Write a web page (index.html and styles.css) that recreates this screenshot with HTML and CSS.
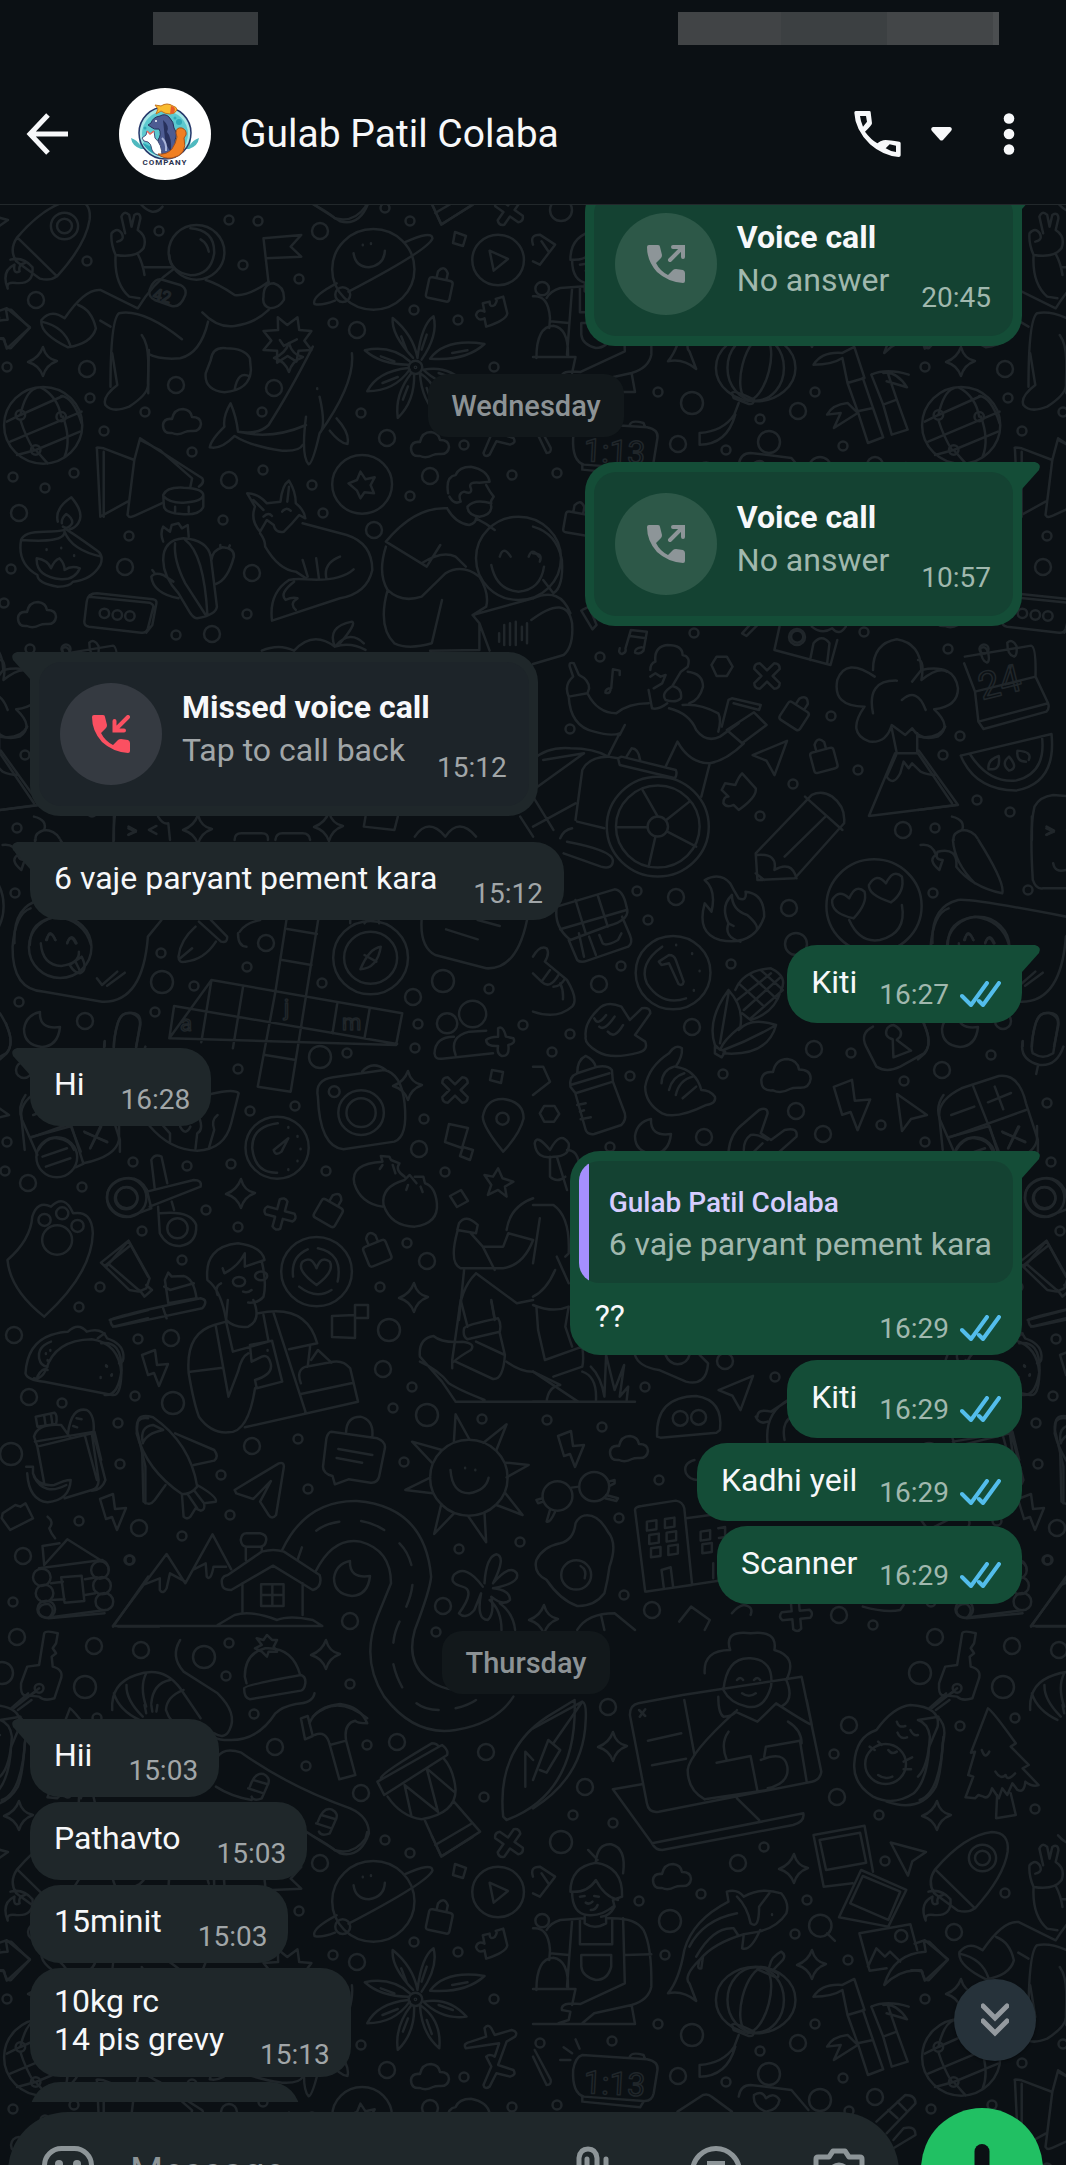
FILE: index.html
```html
<!DOCTYPE html>
<html lang="en">
<head>
    <meta charset="UTF-8">
    <meta name="viewport" content="width=device-width, initial-scale=1.0">
    <title>Gulab Patil Colaba</title>
    <link rel="stylesheet" href="styles.css">
</head>
<body>
    <!-- Shared icons -->
    <svg class="sprite" aria-hidden="true">
        <symbol id="icon-ticks" viewBox="0 0 41 26">
            <path d="M2 15l9 9L27 2M19 20l4 4L39 2" fill="none" stroke="currentColor" stroke-width="4" stroke-linecap="round" stroke-linejoin="round"/>
        </symbol>
        <symbol id="icon-handset" viewBox="0 0 38 38">
            <path d="M2 0h9q2 0 2 2l2 8q0 2-1 3l-5 5q4 8 12 12l5-5q1-1 3-1l7 1q2 1 2 3v8q0 2-2 2Q21 37 10 27Q0 16 0 2Q0 0 2 0z" fill="currentColor"/>
        </symbol>
        <symbol id="icon-call-out" viewBox="0 0 38 38">
            <use href="#icon-handset" width="38" height="38"/>
            <path d="M23 15L36 2M26 2h10v10" fill="none" stroke="currentColor" stroke-width="4" stroke-linecap="round"/>
        </symbol>
        <symbol id="icon-call-in" viewBox="0 0 38 38">
            <use href="#icon-handset" width="38" height="38"/>
            <path d="M36 2L23 15M22.500 6v9.500H32" fill="none" stroke="currentColor" stroke-width="4" stroke-linecap="round"/>
        </symbol>
    </svg>

    <div class="app">
        <div class="status-bar">
            <span class="status-left"></span>
            <span class="status-right"></span>
        </div>

        <header class="chat-header">
            <button class="icon-button back" type="button" aria-label="Back">
                <svg width="42" height="42" viewBox="0 0 42 42"><path d="M22 2L4 21l18 19M4 21h38" fill="none" stroke="currentColor" stroke-width="5"/></svg>
            </button>
            <svg class="avatar" viewBox="0 0 92 92" role="img" aria-label="Profile photo">
                <circle cx="46" cy="46" r="46" fill="#fff"/>
                <path d="M22 61q-9-3-10-11q6 2 9 7q-2-8 0-12q5 6 4 16zM70 61q9-3 10-11q-6 2-9 7q2-8 0-12q-5 6-4 16z" fill="#4fb9bf"/>
                <circle cx="46" cy="45" r="26" fill="#a6e6e6" stroke="#26386b" stroke-width="1.500"/>
                <circle cx="46" cy="46" r="23" fill="#5cc9cf"/>
                <path d="M24 56q10 15 32 13l6-8q-20 4-38-6z" fill="#2aa5b5"/>
                <path d="M29 37l3-2q2-6 9-7q5-3 9 1q5 5 5 11q4 6 1 12l2 14H40l-1-14q4-6 1-11q-5 1-8-2z" fill="#4d5c92" stroke="#27315c" stroke-width="1"/>
                <path d="M44 32q7 6 4 12q5 5 4 20q-5-6-6-13z" fill="#27315c"/>
                <path d="M43 50q5 5 4 13" fill="none" stroke="#a9b4d8" stroke-width="2"/>
                <path d="M23 50l4-3l1-4l3 3l4-3l1 7q7 6 7 18q-8-1-10-6q-1-7-4-8q-5 0-6-4z" fill="#fff" stroke="#46527c"/>
                <path d="M28 43l3 3l4-3" fill="none" stroke="#ef6a5a" stroke-width="1.500"/>
                <path d="M57 45q0-6 6-5q5 2 4 7l-2 3q4 17-12 20q-9 1-14-4q9 1 14-5q4-6 5-12z" fill="#f07f22" stroke="#a6501c"/>
                <path d="M42 18q6-4 12 0q4 1 4 4q-2 4-7 4q-5 0-9-3l-5 3l2-5l-3-4z" fill="#f9bc2f" stroke="#c4731d"/>
                <path d="M52 18q6 1 3 7l-4 1z" fill="#e95b2b"/>
                <circle cx="37" cy="33" r="1" fill="#fff"/><circle cx="60" cy="34" r="3" fill="#2fa9b8"/><circle cx="56" cy="30" r="1.500" fill="#2fa9b8"/><circle cx="26" cy="40" r="1.500" fill="#2fa9b8"/>
                <text x="46" y="77" text-anchor="middle" class="avatar-label">COMPANY</text>
            </svg>
            <h1 class="contact-name">Gulab Patil Colaba</h1>
            <button class="icon-button call" type="button" aria-label="Call">
                <svg width="47" height="46" viewBox="42 60 141 138"><path d="M47 60H88Q92 60 92 64L96 97Q96 103 75 122Q92 145 112 157Q122 150 130 148Q136 145 178 152Q182 153 182 157V193Q182 198 176 198Q130 195 90 160Q45 115 43 65Q43 60 47 60zM60 75H78L81 92L69 107Q62 92 60 75zM168 183V164L149 160L137 172Q150 181 168 183z" fill="currentColor" fill-rule="evenodd"/></svg>
                <svg class="caret" width="21" height="14" viewBox="0 0 21 14"><path d="M2 0h17q3 1 1 4l-8 9q-1.500 1-3 0L1 4Q-1 1 2 0z" fill="currentColor"/></svg>
            </button>
            <button class="icon-button more" type="button" aria-label="More options">
                <svg width="12" height="42" viewBox="0 0 12 42"><circle cx="6" cy="5.500" r="5.300" fill="currentColor"/><circle cx="6" cy="21" r="5.300" fill="currentColor"/><circle cx="6" cy="36.500" r="5.300" fill="currentColor"/></svg>
            </button>
        </header>

        <main class="conversation">
            <!-- Doodle wallpaper: one tile, repeated -->
            <svg class="wallpaper" aria-hidden="true">
                <defs>
                    <marker id="ring-s" markerUnits="userSpaceOnUse" markerWidth="14" markerHeight="14" refX="7" refY="7"><circle class="ring" cx="7" cy="7" r="4.500"/></marker>
                    <marker id="ring-m" markerUnits="userSpaceOnUse" markerWidth="20" markerHeight="20" refX="10" refY="10"><circle class="ring" cx="10" cy="10" r="8"/></marker>
                    <marker id="ring-l" markerUnits="userSpaceOnUse" markerWidth="28" markerHeight="28" refX="14" refY="14"><circle class="ring" cx="14" cy="14" r="11"/></marker>
                    <path id="sparkle" d="M1-15Q4-3 15-1Q4 3 1 14Q-3 3-14 0Q-3-4 1-15z"/>
                    <path id="cloud" d="M-10 11Q-19 12-19 3Q-18-4-10-3Q-8-13 1-13Q9-12 10-5Q19-5 19 2Q18 10 9 9Q5 9 3 10Q-4 14-10 11z"/>
                    <path id="bolt" d="M-13-13L0-18L2-3L13-4L4 18L-1 5L-7 7z"/>
                    <path id="cursor" d="M-13-18L17 3L1 7L-8 19z"/>
                    <path id="cross" d="M-4-14Q0-18 4-14V-4H14Q18 0 14 4H4V14Q0 18-4 14V4H-14Q-18 0-14-4H-4z"/>
                    <path id="moon" d="M-2-18Q-3 0 18-3Q16 16 0 17Q-18 15-18-1Q-16-15-2-18z"/>
                    <path id="lock" d="M-9-7H9Q12-7 12-4V11Q12 14 9 14H-9Q-12 14-12 11V-4Q-12-7-9-7zM-5-7V-14Q0-22 5-14V-7"/>

                    <g id="doodles">
                        <g class="rings">
                            <path class="s" d="M229 220L258 221L159 231L243 265L299 279L87 261L385 208L410 221L414 310L458 320L333 323L7 367L90 398L145 412L104 431L192 452L13 477L74 473L45 488L263 470L312 485L223 520L323 513L262 412L361 413L410 496L129 536L11 569L4 603L247 614L176 635L464 445L512 475L494 367L30 649L66 649L658 392L815 392L760 419L843 446L726 450L557 473L849 479L694 633L864 632L600 657L570 729L831 716L42 736L25 755L858 770L793 784L760 816L59 800L92 812L17 828L15 893L161 953L194 986L247 967L19 1002L155 1012L322 983L489 989L418 1024L523 1025L415 1048L347 1053L238 1069L295 1106L250 1111L424 1119L7 1142L5 1171L82 1187L133 1162L187 1166L231 1164L326 1171L445 1172L206 1210L238 1227L142 1231L182 1260L407 1243L100 1287L380 1287L79 1307"/>
                            <path class="s" d="M637 891L648 920L621 966L731 964L110 890L570 1034L552 1052L723 1074L630 1076L851 1053L73 1055L904 1081L881 1125L129 1103L610 1147L645 1387L547 1420L602 1427L775 1377L118 1423L659 1480L619 1518L624 1595L873 1625L129 1560L135 1396L138 1339L62 1403L120 1464L79 1521L182 1536L130 1560L13 1602L221 1475L230 1515L298 1439L308 1489L393 1408L412 1387L482 1419L404 1462L459 1549L520 1542L229 1643L226 1676L436 1632L350 1684L254 1714L367 1745L306 1766L484 1797L834 1754L573 1815L613 1823L42 1726L97 1718L117 1809L879 1815L764 215L885 229L639 269L701 262L807 268L795 302L665 323L848 328L540 411L612 409"/>
                            <path class="m" d="M320 231L357 330L36 300L176 385L274 388L387 438L229 480L19 513L374 530L430 476L125 567L252 573L212 634L87 369L678 444L798 411L875 465L903 830L797 637L266 943L85 1021L413 997L28 1183L419 1149L427 1261L676 897L789 908L599 984L692 1027L814 1049L24 1070L704 1137L796 1111L823 1134L725 1361L652 1610L839 1615L171 1338L383 1369L29 1397L252 1446L14 1335L139 1528L23 1556L443 1606L17 1637L94 1646L141 1650L350 1621L275 1747L397 1742L486 1752L361 1793L608 1707L585 1787L837 1797L849 1725L738 231"/>
                            <path class="l" d="M692 403L769 442L820 468L162 982L443 981L320 1057L796 944L389 1330L173 1403L427 1415L11 1454L204 1657L85 1687L2 1673L561 210L670 289"/>
                        </g>

                        <!-- small repeating shapes -->
                        <use href="#sparkle" x="288" y="358"/><use href="#sparkle" x="42" y="362"/><use href="#sparkle" x="240" y="1194"/>
                        <use href="#sparkle" x="413" y="1298"/><use href="#sparkle" x="407" y="1086"/><use href="#sparkle" x="325" y="1655"/>
                        <use href="#sparkle" x="18" y="1816"/><use href="#sparkle" x="612" y="1747"/><use href="#sparkle" x="793" y="237"/>
                        <use href="#sparkle" x="811" y="333"/><use href="#sparkle" x="328" y="827"/><use href="#sparkle" x="197" y="830"/><use href="#sparkle" x="543" y="1620"/>
                        <use href="#cloud" x="182" y="422"/><use href="#cloud" x="37" y="615"/><use href="#cloud" x="430" y="445"/>
                        <use href="#cloud" transform="translate(786 1076) scale(1.300)"/><use href="#cloud" x="629" y="1449"/><use href="#cloud" x="672" y="245"/>
                        <use href="#bolt" transform="translate(852 1105) scale(1.400)"/><use href="#bolt" x="571" y="1449"/><use href="#bolt" x="113" y="1512"/><use href="#bolt" x="155" y="1368"/>
                        <use href="#cursor" x="910" y="1112"/><use href="#cursor" transform="translate(739 1393) rotate(75)"/>
                        <use href="#cursor" transform="translate(909 223) rotate(-20)"/><use href="#cursor" transform="translate(773 758) rotate(75)"/>
                        <use href="#cross" transform="translate(767 676) rotate(45)"/><use href="#cross" transform="translate(455 1090) rotate(45)"/>
                        <use href="#cross" transform="translate(280 1214) rotate(15)"/><use href="#cross" transform="translate(509 211) rotate(35)"/><use href="#cross" transform="translate(796 1615) rotate(-5)"/>
                        <use href="#moon" x="42" y="1030"/><use href="#moon" x="653" y="1137"/><use href="#moon" x="352" y="1579"/>
                        <use href="#lock" transform="translate(440 286) rotate(12)"/><use href="#lock" transform="translate(796 713) rotate(33)"/>
                        <use href="#lock" transform="translate(823 757) rotate(-15)"/><use href="#lock" transform="translate(330 1210) rotate(30)"/>
                        <use href="#lock" transform="translate(376 1250) rotate(-22)"/><use href="#lock" transform="translate(577 520) rotate(10)"/>
                        <path d="M449 1124L468 1128L462 1148L445 1142zM463 1147L473 1150L470 1160L460 1156zM492 1070L503 1072L501 1083L490 1080zM450 1196L461 1190L468 1201L457 1207zM455 232L466 236L463 246L453 243zM332 1316L355 1315V1338L332 1337zM355 1305H368V1318H355z"/>

                        <!-- astronaut, planet, flower -->
                        <g transform="scale(.34 .3333)">
                            <path d="M340 765Q325 730 328 700Q345 680 358 700Q368 720 345 725M368 700L357 650Q365 630 380 645L387 680L395 645Q412 635 413 655L405 690Q435 710 422 745Q400 775 340 765Q335 850 380 890L410 895M405 762Q420 790 425 825"/>
                            <circle cx="578" cy="757" r="82"/><path d="M560 685Q632 690 630 760Q620 825 560 826Q500 815 498 765M590 718Q610 730 614 755"/>
                            <path d="M425 802H510M510 808Q450 850 405 925L295 870Q250 865 190 955Q150 925 122 960Q115 1000 200 1042Q270 1030 282 985Q270 930 230 915M122 965Q190 980 208 1040M605 840Q640 850 690 885Q730 890 790 845M775 890Q775 850 805 850Q838 860 835 900Q820 925 795 925Q770 920 775 890M595 937Q640 985 690 978Q750 970 790 930M612 965Q590 1060 530 1075Q470 1080 436 1062M325 1160Q325 960 350 940Q420 925 535 1018M417 1005Q435 1030 436 1080V1180M295 962L325 980"/>
                            <path d="M440 870Q455 830 480 840L530 855Q550 865 545 885Q530 925 505 918L455 900Q435 890 440 870M775 715L886 705L855 740L886 770L783 775M775 715L790 850"/>
                            <circle cx="1098" cy="808" r="121"/><circle cx="1008" cy="884" r="22"/>
                            <path d="M1190 727Q1270 690 1272 715Q1260 750 1025 875M990 850Q915 890 925 912Q945 918 985 902M1040 760Q1045 800 1085 802Q1130 795 1132 752M1067 734v2M1091 730v2"/>
                            <circle cx="1465" cy="780" r="76"/><path d="M1440 752L1494 777L1452 812z"/>
                            <path d="M775 993L818 990L817 952L845 975L875 952L880 990L916 993L895 1022L916 1050L878 1052L872 1085L846 1068L815 1088L815 1052L775 1050L798 1022zM823 1020L835 1038L873 1018"/>
                            <path d="M1420 910L1440 905Q1440 925 1455 915Q1465 900 1458 897L1480 890L1492 940Q1490 960 1430 980L1425 955Q1405 965 1400 945Q1405 925 1425 935zM-10 935L20 925L88 982L20 1046L10 1015H-20"/>
                            <path d="M620 1080Q625 1040 665 1045Q720 1045 735 1075L738 1110Q735 1170 660 1177Q600 1170 605 1120zM690 1170Q700 1110 735 1130M920 612Q970 640 985 655Q1040 670 1075 620L1080 600M1270 612L1298 673L1390 615M412 610Q450 655 478 620"/>
                        </g>
                        <text x="152" y="299" transform="rotate(14 152 299)" font-size="16">42</text>

                        <!-- globe, whale, fox, cactus, lamp -->
                        <g transform="translate(0 360) scale(.34 .3333)">
                            <circle cx="127" cy="196" r="115"/>
                            <path d="M60 165Q75 95 105 85M180 170Q170 110 120 82M20 185L60 165L185 108M30 245L240 155M60 180Q75 230 100 270M185 170Q210 240 190 290M105 270L235 215M180 108Q215 110 240 190M50 285L105 270L140 310"/>
                            <circle cx="60" cy="165" r="14"/><circle cx="180" cy="170" r="14"/><circle cx="105" cy="270" r="14"/>
                            <path d="M330-20L345 75Q300 110 310 135Q330 160 380 140Q440 100 435 70L438-30M285 265Q280 260 305 265L395 300L375 465Q380 475 395 468L480 428M285 265L295 470L375 425M305 275V470M395 300L412 235L595 355Q602 370 585 380M412 240L470 270L565 355L560 380"/>
                            <path d="M480 405Q490 380 540 383Q600 385 598 408V440Q590 465 540 463Q480 460 482 435zM482 410Q500 430 540 428Q595 425 598 405M515 440v15M555 440v15"/>
                            <path d="M1035-20Q1045 70 940 220Q920 310 908 313Q885 290 900 170M920-40Q850 100 790 195Q760 225 700 215Q695 170 678 130Q655 170 660 200Q620 240 617 262Q650 270 690 228Q740 260 830 272Q880 275 890 255M700 215Q800 240 900 195M940 220Q960 200 940 110M990 175Q1030 220 1022 252Q1000 250 970 212M933 85v2"/>
                            <circle cx="1065" cy="373" r="88"/><path d="M1025 370L1050 360L1060 335L1075 358L1102 352L1090 375L1100 400L1072 397L1060 415L1050 392z"/>
                            <path d="M727 400Q760 400 785 430L825 425Q830 375 850 362Q870 395 870 430Q895 450 898 475L880 465Q860 490 835 515Q810 520 805 495L785 480L765 515Q735 480 750 440zM775 470Q790 455 800 468M830 455Q840 440 855 452M765 520Q780 540 780 560Q820 630 870 635L900 655M890 490L1020 525Q1095 550 1095 630Q1080 700 1000 715L800 782Q790 700 850 660Q870 655 900 658Q1000 665 1040 628M865 665Q820 700 840 720Q860 710 875 715Q850 730 870 750M890 600L905 650M930 595L938 655M1000 590Q950 610 960 655M745 420L775 450M850 380L845 425"/>
                            <path d="M170 485Q160 445 210 412Q250 460 230 490Q220 505 205 508M182 490Q180 475 195 462Q215 475 212 490Q200 510 185 500M62 540Q70 515 130 515Q175 515 195 508Q215 520 290 575Q305 590 295 615Q270 660 215 665Q205 680 170 680Q110 670 110 645Q50 610 62 540M62 540Q190 550 190 515M190 515Q210 570 298 590M108 595Q140 600 150 625Q160 600 175 595Q190 610 190 630Q210 615 235 625Q220 660 180 658Q105 650 108 595M137 568v2M180 563v2M218 586v2"/>
                            <path d="M480 600Q480 540 540 535Q610 540 620 590L638 740Q635 765 580 775Q570 775 560 760L525 700Q480 650 480 600M515 550Q510 600 545 670L605 765M545 540Q600 580 610 765M480 545Q470 520 480 500L500 515L505 495L525 490L535 505L552 495L555 530M622 600Q625 570 655 562Q690 565 688 590Q670 660 635 672M525 715Q450 700 445 650Q455 635 480 645L510 665M648 555v10M676 556l-3 8M448 630l6 8"/>
                            <path d="M262 710L440 728Q455 735 450 745L435 805Q430 820 415 818L262 800Q248 798 248 785L255 725Q258 700 285 700L450 718Q462 720 460 730L448 795L430 818"/>
                            <circle cx="307" cy="760" r="14"/><circle cx="345" cy="765" r="14"/><circle cx="382" cy="768" r="14"/>
                            <path d="M1318 400Q1310 350 1340 345Q1350 320 1385 320Q1435 330 1440 365L1410 368Q1375 365 1385 385Q1390 405 1365 395Q1345 400 1355 425Q1335 435 1322 410M1430 375Q1440 395 1452 410Q1440 425 1445 440Q1445 465 1410 470Q1375 465 1375 440Q1395 415 1445 430M1315 445Q1340 490 1380 495Q1400 490 1400 475M1315 445Q1220 440 1135 545L1255 620L1295 555M1400 475Q1430 490 1455 510M1135 560Q1110 640 1140 690Q1180 730 1240 710Q1290 660 1310 640Q1360 610 1410 650Q1440 700 1430 740L1390 765M1240 610Q1300 570 1340 590L1370 620M1140 690Q1110 800 1160 850Q1200 870 1270 850L1300 720M1265 872L1410 870V790L1390 765L1568 715M1410 790L1440 872"/>
                            <circle cx="1525" cy="595" r="125"/><path d="M1470 590Q1480 555 1502 590M1555 590Q1565 560 1585 590M1445 615Q1460 690 1525 695Q1590 690 1600 620M1468 820v25M1483 795v60M1500 790v65M1517 785v70M1535 800v40M1550 790v60"/>
                            <path d="M770 872Q820 850 865 872Q920 810 985 860Q1030 845 1075 870M985 860Q960 800 1035 785Q1050 790 1000 850M990 855Q1030 810 1070 850M0 900Q20 900 10 960Q60 920 85 935M0 1130Q60 1140 80 1100M0 1180L100 1330M0 1350L110 1335"/>
                            <path d="M335 1370V1440M465 1370Q480 1395 495 1390L500 1440M378 1400l22 12l-22 12M460 1398l-22 12l22 12M100 1370Q140 1380 130 1410Q100 1420 105 1440M130 1410Q160 1410 175 1435M690 1440Q690 1420 710 1420H770Q790 1420 788 1440M810 1440Q812 1420 830 1420H890Q910 1420 912 1440M1075 1370L1070 1400L1160 1410L1170 1370M1220 1430Q1260 1370 1310 1430Q1350 1370 1400 1430M1530 1370L1568 1430"/>
                        </g>

                        <!-- dancer, calendar, melon, tree -->
                        <g transform="translate(533 360) scale(.34 .3333)">
                            <path d="M-5 780Q100 700 115 790Q120 860 90 885L0 912M0 500Q70 520 85 600Q90 680 60 700L30 660M0 715Q80 680 110 760M0 580Q30 580 20 605M145 750L165 740L187 795L175 808L142 752M615 820L655 775L665 790L628 828z"/>
                            <path d="M255 865Q250 880 262 882Q275 878 272 865L288 810L335 815L325 872Q315 885 300 878Q298 865 320 862M285 828L332 835M228 990Q225 1003 213 998Q212 985 230 985L235 928L255 932V945"/>
                            <path d="M345 930Q345 910 360 905Q355 860 395 855Q440 855 440 885Q465 890 455 920L435 935L410 978M455 935Q500 940 500 980Q490 1020 460 1030M345 950L360 940L375 950L390 945L380 970L355 985M340 990L350 1045Q370 1050 395 1030M410 978Q440 985 435 1015Q420 1030 390 1020Q375 1000 410 978M340 1030Q280 1030 245 1060Q190 1060 160 1000L165 985Q165 960 135 945L120 910Q105 905 108 920L118 950Q90 975 105 1010Q110 1100 180 1115Q230 1130 255 1120L220 1190M105 1010L160 1000M270 1095L255 1125M400 1045Q460 1060 480 1110Q510 1150 550 1130L605 1090M440 1035Q490 1030 545 1060Q555 1080 545 1115M390 1220L425 1145Q460 1210 520 1210Q570 1200 620 1150M520 1210L495 1310"/>
                            <path d="M555 1100L575 1020L585 1015L670 1035L665 1050L590 1030M570 1110L650 1057L687 1095L615 1150zM0 1200Q40 1160 110 1165Q180 1165 220 1190L250 1195M30 1200L150 1180M0 1290L150 1180M125 1380L145 1230Q165 1190 220 1190M250 1195L260 1190L420 1230Q425 1240 418 1255L255 1215zM275 1190L290 1165Q310 1165 315 1200M0 1400L125 1330M0 1310L60 1410M130 1385L210 1405M80 1435Q90 1410 115 1405"/>
                            <circle cx="367" cy="1400" r="150"/><circle cx="367" cy="1400" r="123"/><circle cx="367" cy="1400" r="30"/>
                            <path d="M367 1370L322 1290M392 1380L460 1325M395 1415L480 1460M360 1430L340 1520M338 1402H245"/>
                            <path d="M725 800L710 870L875 915L895 840M815 900L825 850Q850 820 872 850L865 912M820 800Q850 825 880 805Q900 830 920 800M525 915L540 890H570L587 920L570 948H540z"/>
                            <circle cx="777" cy="830" r="18"/>
                            <path d="M1000 930Q1000 850 1070 838Q1140 850 1142 930Q1240 910 1250 985Q1250 1040 1180 1048Q1235 1100 1190 1130Q1140 1145 1115 1105L1095 1125L1055 1095Q1040 1150 990 1145Q920 1120 975 1040Q880 1040 895 960Q920 890 1005 950M1000 1060Q980 960 1070 962M1085 1020Q1130 980 1155 1050M1142 930L1115 965M1055 1105L1070 1180H1130V1120M1065 1180L988 1368L1250 1335L1135 1172M1068 1185L1040 1250Q1060 1280 1080 1240L1090 1205L1105 1225L1115 1210L1140 1235Q1160 1245 1185 1245"/>
                            <path d="M1270 890L1465 857Q1480 860 1478 950L1300 995L1268 910M1478 950L1515 1030Q1520 1045 1510 1055L1325 1107L1310 1085L1300 995M1310 1085L1515 1030M1315 865Q1330 855 1338 875Q1345 905 1335 908Q1320 905 1315 865M1395 848Q1410 835 1422 858Q1425 885 1415 890Q1395 885 1395 848"/>
                            <path d="M1258 1187L1525 1122Q1540 1270 1420 1292Q1300 1290 1258 1187M1285 1182Q1340 1270 1420 1262Q1510 1240 1497 1130M1340 1228Q1335 1200 1370 1188Q1375 1230 1350 1228zM1400 1232Q1375 1210 1400 1190Q1430 1225 1400 1232zM1450 1205Q1420 1205 1425 1172Q1470 1175 1458 1200"/>
                            <path d="M565 1270L595 1275Q605 1250 615 1240L655 1285Q660 1310 605 1350L590 1335Q570 1345 560 1330Q560 1310 575 1310L555 1290zM660 1560L655 1480L820 1305Q850 1290 880 1310Q920 1340 915 1390L770 1555zM800 1310L910 1410M740 1490L860 1370M660 1485Q720 1480 710 1530Q760 1500 775 1555M655 1540L680 1560"/>
                            <path d="M1470 1560Q1460 1400 1475 1340Q1490 1310 1530 1305L1568 1308M1510 1405l22 10l-22 10M1530 1510Q1535 1540 1568 1530M1470 1560Q1480 1590 1500 1585H1568"/>
                        </g>
                        <text x="982" y="700" transform="rotate(-14 982 700)" font-size="38">24</text>

                        <!-- sticker, crossword, compass, camera -->
                        <g transform="translate(0 840) scale(.34 .3333)">
                            <path d="M90 205Q45 220 37 320Q35 450 130 455L300 485Q420 490 435 290L475 240M285 415L300 435L345 395M315 437L367 398"/>
                            <circle cx="177" cy="322" r="92"/><path d="M138 300Q145 260 163 300M198 308Q210 275 225 310M120 310Q125 375 180 378Q235 370 232 335M205 375L240 350Q260 390 235 400Q220 400 205 375M222 365l12 25"/>
                            <path d="M585 245L650 305Q670 310 668 290L620 240M575 260Q530 300 525 350Q525 370 545 365Q600 360 635 305M530 355L565 325M700 280Q700 320 725 320M705 275Q720 250 765 240"/>
                            <path d="M850 190L810 455L758 740L855 755L942 200M845 267L932 282M830 360L916 375M622 420L1183 520L1165 615L498 595zM512 498L1168 612M622 420L592 607M715 440L685 625M992 490L978 580M1087 508L1072 595M780 645L870 660M512 498L498 595"/>
                            <circle cx="1090" cy="353" r="110"/><circle cx="1090" cy="353" r="78"/><path d="M1120 320Q1085 325 1060 388Q1110 385 1120 320M1072 345l35 20M1030 250V235M1115 250Q1110 200 1072 250"/>
                            <path d="M1240 240Q1235 320 1280 345L1430 385Q1520 390 1550 240M1312 268L1405 298M1405 240L1470 258M0 520Q50 600 20 640L0 658M335 620Q340 530 370 520Q420 510 412 560L400 620M308 603v15"/>
                            <circle cx="1315" cy="550" r="30"/><circle cx="1390" cy="522" r="40"/><path d="M1335 590Q1280 590 1278 640Q1280 660 1300 656L1450 640M1340 645Q1320 590 1380 575L1430 572M1465 565Q1480 555 1488 590L1510 595Q1518 610 1495 615Q1500 650 1475 648Q1460 640 1465 618Q1430 620 1430 600Q1440 590 1465 590z"/>
                            <path d="M935 770Q925 720 980 712L1130 690Q1180 700 1190 790Q1200 890 1160 905L1010 928Q940 920 935 770M1065 695Q1095 660 1135 690"/>
                            <circle cx="1062" cy="818" r="67"/><circle cx="1062" cy="818" r="43"/><circle cx="983" cy="755" r="16"/>
                            <path d="M1480 935Q1420 860 1420 830Q1430 775 1480 777Q1540 785 1540 835Q1530 880 1480 935"/><circle cx="1478" cy="836" r="18"/>
                            <circle cx="815" cy="923" r="93"/><path d="M817 850Q740 860 742 925Q750 1000 815 998M805 930L848 895L828 935Q810 950 805 930M848 861v2M875 888v2M884 926v2M875 962v2M848 988v2"/>
                            <path d="M75 765Q50 800 65 840L110 945M210 858L245 970Q340 950 350 900V858M90 892L210 858M250 878L315 905M295 860L265 925M125 950l72-25M135 980l72-25M248 970L222 982M440 858Q500 930 580 932Q660 930 680 850L702 760Q690 745 620 762M480 858L500 880V905M530 860Q545 890 560 860M585 830Q600 870 580 880L575 925M640 825Q620 840 630 870L615 922"/><circle cx="167" cy="952" r="60"/>
                            <path d="M1190 1010Q1160 990 1175 970L1150 960L1145 950L1120 948L1125 965Q1030 970 1042 1030Q1060 1090 1125 1100M1225 1030L1205 1005L1190 1020Q1120 1040 1128 1095Q1150 1160 1220 1160Q1290 1150 1285 1090Q1280 1040 1250 1030L1245 1010L1220 1010M1125 975l-8 12M1155 975l8 25M1200 1035l-5 15M1237 1040l6 16"/>
                            <path d="M130 1430Q30 1350 22 1260Q90 1200 95 1130Q110 1080 150 1100Q190 1060 215 1120Q270 1110 273 1180Q270 1300 130 1430"/>
                            <circle cx="168" cy="1200" r="44"/><circle cx="131" cy="1140" r="18"/><circle cx="183" cy="1120" r="18"/><circle cx="228" cy="1158" r="18"/>
                            <path d="M432 1050Q410 1010 370 1015Q310 1030 315 1080Q330 1130 380 1130L445 1105zM432 1055L570 1020Q595 1020 590 1040L440 1100M455 1045L445 960Q455 940 475 950L492 1030M465 1100L470 1180Q490 1220 530 1218Q580 1210 577 1155Q560 1110 470 1120M505 1085L512 1110"/>
                            <circle cx="371" cy="1075" r="33"/><circle cx="522" cy="1165" r="30"/>
                            <path d="M297 1268L378 1202L440 1315L430 1345L408 1355L380 1350zM308 1278L385 1215M410 1350L425 1370L447 1350L430 1335M485 1320L495 1298L505 1310L540 1308Q570 1315 578 1375L495 1390zM483 1340L500 1350L570 1330M325 1440Q330 1430 590 1375Q615 1380 595 1405L340 1460Q325 1460 325 1440M480 1405l10 30"/>
                            <path d="M665 1440Q650 1350 610 1320Q600 1220 700 1210Q770 1220 778 1260L720 1280V1240Q700 1280 660 1300L655 1285M770 1265Q785 1330 775 1370Q760 1390 730 1388M650 1330Q630 1340 640 1365M715 1355Q728 1360 740 1350"/>
                            <ellipse cx="703" cy="1325" rx="18" ry="14"/><ellipse cx="768" cy="1308" rx="18" ry="13"/>
                            <circle cx="931" cy="1295" r="104"/><path d="M931 1335Q870 1290 890 1265Q915 1245 931 1285Q945 1245 970 1265Q985 1295 931 1335M862 1310Q855 1250 905 1228M935 1225Q1010 1240 993 1325M880 1340Q930 1380 975 1350"/>
                            <path d="M1425 1005L1450 1010L1465 985L1478 1015L1510 1025L1485 1040L1490 1070L1465 1050L1435 1065L1445 1035z"/>
                            <path d="M1350 1150Q1370 1120 1405 1155L1400 1180L1345 1170zM1345 1175Q1320 1270 1355 1285H1480Q1540 1275 1568 1200M1385 1180L1420 1220H1480L1495 1180L1568 1200M1490 1170Q1500 1100 1568 1075M1420 1220L1455 1290M1365 1290L1350 1440M1400 1300Q1350 1350 1350 1440M1400 1300L1520 1390L1568 1380M1445 1385L1455 1440"/>
                        </g>
                        <g font-size="22"><text x="180" y="1031">a</text><text x="284" y="1015">j</text><text x="342" y="1030">m</text></g>

                        <!-- fire, clock, corn, hands -->
                        <g transform="translate(533 840) scale(.34 .3333)">
                            <path d="M90 40L200 80Q235 90 235 60Q230 30 100 5M70 200L240 148Q265 150 275 200Q290 240 220 258L110 300Q60 260 70 200M125 180L155 280M190 165L220 260M80 268L275 210M105 300L130 360Q140 370 160 362L280 320Q295 310 285 285L262 230M165 290L185 345M135 280L150 350M195 285L205 310Q215 320 250 300L260 280"/>
                            <path d="M505 120Q540 150 525 215L505 190Q480 280 550 300Q650 320 680 230Q680 160 625 155Q630 185 605 175Q590 150 580 130Q550 95 505 120M585 165Q550 200 575 250Q560 290 610 305M585 165Q585 210 630 225Q670 260 655 275M575 250L590 258"/>
                            <circle cx="412" cy="398" r="110"/><path d="M380 320Q310 370 335 430Q380 500 450 475M370 365L400 345Q415 345 420 360L443 425Q440 440 428 432L400 370L378 375zM421 314v2M468 340v2M490 392v2M473 450v2"/>
                            <path d="M575 450Q510 540 535 615L550 630Q560 600 610 560Q620 500 575 450M575 460L550 610M560 640Q690 650 715 555Q640 530 605 570M560 630Q640 600 715 555M535 620L565 635L555 652L535 640zM595 450Q620 390 700 385Q750 410 730 450Q710 520 640 540L615 520M605 430L680 500M640 405L715 475M670 390L730 445M600 480L700 400M620 510L730 410M640 535L735 450"/>
                            <circle cx="1003" cy="198" r="140"/><path d="M943 235Q875 220 880 180Q900 145 930 175Q950 130 975 155Q985 190 943 235M1053 187Q985 165 988 135Q1010 95 1038 130Q1060 85 1085 110Q1095 155 1053 187M930 240Q960 310 1020 300Q1100 280 1085 195"/>
                            <path d="M0 350Q20 315 40 325Q50 340 35 365L100 420Q135 480 115 500Q70 540 0 515M0 400L25 425L50 390M25 425Q50 450 75 405M60 440Q80 440 95 415M80 430Q90 450 88 478"/>
                            <path d="M155 590Q150 550 190 510Q215 480 260 500L285 540L320 505Q345 500 345 520L300 585L330 605Q340 630 310 638Q230 660 190 635Q150 610 155 590M180 535Q190 560 215 525M195 560Q210 575 240 530M220 575Q240 600 265 555"/>
                            <path d="M400 640Q420 610 438 625Q440 650 420 680Q480 690 495 750Q520 750 535 770Q540 790 510 795Q420 840 380 820Q330 790 330 740Q340 680 400 640M415 680Q380 690 378 730M400 750Q410 710 445 700M420 765Q430 720 470 710M440 775L480 740"/>
                            <path d="M110 740Q105 710 130 700L190 680Q220 675 232 690L235 725L125 760zM110 735L225 700M130 700Q130 660 155 648Q180 660 185 682M125 762L155 870Q160 885 180 882L260 855Q275 840 270 820L235 725M130 795l25-5M138 815l12-4M140 838l30-6"/>
                            <path d="M575 935Q580 880 620 850L665 810Q690 800 690 820L670 880L700 900L740 870Q780 860 775 890L720 940M620 930Q620 900 640 885Q660 880 690 900M650 935L675 910M0 680L30 680L50 725L0 765M20 820L33 798H63L77 822L62 845H33z"/>
                            <path d="M1000 560Q960 580 980 620L1010 680Q1040 700 1080 680L1150 640Q1170 620 1160 580L1150 550M1060 555Q1090 570 1080 590L1070 600L1112 632L1060 652L1058 598Q1030 590 1042 565Q1050 555 1060 555"/>
                            <path d="M1205 930L1195 830Q1190 780 1260 745L1370 708Q1430 700 1450 790L1485 900V935M1295 740L1370 935M1225 892L1450 810M1230 825l68-25M1338 787l68-28M1358 740l25 68M1380 875l68 32M1430 860l-32 65M1245 930Q1270 890 1300 895Q1340 900 1350 930"/>
                            <path d="M1470 640Q1460 620 1480 545Q1490 515 1520 520Q1550 530 1543 560L1530 640Q1500 660 1470 640M1440 605Q1430 660 1490 675Q1540 680 1560 620M1485 678L1480 702M1175 310Q1170 200 1250 180Q1290 175 1568 230M1220 315Q1220 240 1300 230Q1380 240 1400 315M1268 300Q1280 265 1295 300M1330 310Q1340 280 1355 310M1140 15Q1175 10 1185 45Q1160 60 1195 90L1205 60Q1180 60 1190 35Q1250 20 1245 80Q1290 140 1380 160Q1390 130 1310 0M1235 0Q1240 70 1300 130"/>
                        </g>

                        <!-- jelly, glasses, egg, buildings -->
                        <g transform="translate(533 1130) scale(.34 .3333)">
                            <path d="M5 40Q10 10 50 60Q80 0 105 40Q110 80 60 80Q10 90 5 40M70 80L100 180M50 80V140Q70 160 95 140M100 60Q130 60 135 100M0 225H60Q110 260 105 370L95 380M20 265L0 400M70 380L105 460M0 500Q40 480 65 420M0 525Q60 550 105 530M10 530L15 600L35 690M105 530L95 590L115 650M35 690L145 650Q150 690 145 710L60 740M0 725L80 765Q45 770 40 815H0H300M145 725Q190 740 185 815M170 710Q200 740 210 800L215 675L240 780L268 705L255 800L280 770L275 815"/>
                            <path d="M365 920Q360 800 480 798Q560 810 550 900L540 908L375 923zM300 675Q310 710 370 720L450 755Q510 770 515 700L490 675M390 675Q400 700 425 703Q455 700 460 675"/>
                            <circle cx="433" cy="865" r="22"/><circle cx="487" cy="862" r="22"/><circle cx="72" cy="1098" r="44"/><circle cx="180" cy="1070" r="44"/>
                            <path d="M113 1073L135 1070M222 1055L240 1050V1060L225 1068M215 1095L250 1105L245 1113L212 1105M28 1105L10 1110L15 1120L30 1115M50 1140L40 1175Q50 1180 65 1145"/>
                            <path d="M150 1157Q190 1150 220 1205Q250 1240 225 1310Q220 1350 210 1390Q180 1430 130 1428Q80 1410 40 1350Q0 1330 10 1290Q30 1250 80 1240Q120 1230 125 1180Q135 1160 150 1157"/>
                            <circle cx="127" cy="1335" r="44"/><path d="M140 1308Q160 1320 152 1345"/>
                            <path d="M330 1385L300 1140Q300 1130 320 1128L420 1112Q440 1115 445 1135L468 1365zM335 1385L560 1350M450 1165L560 1150M385 1375L378 1320L405 1312L412 1370M335 1175l28-4v27l-28 4zM388 1167l28-4v27l-28 4zM342 1215l28-4v27l-28 4zM393 1208l28-4v27l-28 4zM347 1255l28-4v27l-28 4zM398 1248l28-4v27l-28 4zM493 1205l28-4v27l-28 4zM498 1243l28-4v27l-28 4zM545 1195l20-4v30l-18 3M530 1345V1300"/>
                            <path d="M660 860Q660 835 700 845L745 815M655 860Q665 885 690 875M690 940Q680 850 750 810M740 930Q730 880 760 860M475 990Q440 1000 450 1030Q460 1050 485 1050M130 1500Q160 1450 240 1450L300 1500M200 1455L210 1500M430 1475L465 1430L520 1470L505 1500M585 1450Q600 1430 620 1425Q650 1430 640 1455M970 1430Q1040 1450 1080 1440L1090 1425M1245 1440Q1250 1420 1275 1422Q1300 1440 1275 1465Q1245 1460 1245 1440M1275 1465L1440 1450"/>
                            <circle cx="1505" cy="203" r="58"/><circle cx="1505" cy="203" r="32"/>
                            <path d="M1555 170L1568 200M1445 410L1510 333L1568 440M1455 405L1540 480M1455 570L1568 540M1465 590L1568 565M1430 640Q1490 630 1490 720Q1480 800 1440 795M1440 610L1420 625M1447 708v2M1460 735v2M1535 900Q1530 860 1568 865M1535 900L1560 1010V1120M1235 935L1410 905L1430 990M1465 1490L1568 1340M1480 1490H1600"/>
                        </g>

                        <!-- taco, house, road, sun -->
                        <g transform="translate(0 1300) scale(.34 .3333)">
                            <path d="M75 220Q80 130 150 105Q180 95 200 95Q230 65 255 95Q300 80 315 115Q360 130 363 165Q365 190 350 190M75 220Q80 240 130 245L330 285Q355 290 357 220Q350 130 270 118Q160 120 135 210Q120 240 100 235M150 125Q110 140 115 175Q120 200 140 200M312 196v3M296 231v3M329 223v3M110 230Q125 200 140 210M135 160v2M148 150v2M140 180v2"/>
                            <path d="M555 220Q545 100 630 75L665 65L685 155L790 125L775 45M560 215L655 203M635 80L672 290L700 215Q710 170 730 160M555 220Q570 310 585 350Q620 400 670 397Q730 400 750 265M670 0L665 60Q690 85 730 80Q770 60 745 0M735 135L800 122L830 245L755 265L750 240Q800 225 797 195Q790 160 770 170L740 185zM760 40Q900 10 933 130L850 148M805 40L900 340M720 382L1053 305L1030 205Q1010 180 980 185L900 200Q870 210 885 250M885 282L1040 248M905 200L912 140M915 180L935 150L975 188M787 150v2"/>
                            <path d="M1340 305H1700L1568 215M1340 305L1300 245L1235 170Q1230 115 1275 108Q1300 130 1360 125Q1400 130 1385 150Q1350 170 1335 185M1235 185Q1290 210 1320 250Q1350 270 1425 300M1330 205V180L1355 0L1375 80M1445 0L1455 55M1365 85Q1370 75 1465 55Q1475 70 1470 95L1375 118Q1360 110 1365 85M1470 100L1485 165Q1480 240 1450 237L1340 185M1400 125L1485 165M1490 185Q1530 215 1568 215"/>
                            <path d="M105 350L160 338Q170 345 165 372L110 380zM130 348l4 28M150 343l4 28M110 440L100 410Q110 370 180 375L205 410M200 400Q210 320 255 330Q280 345 275 400M110 440L270 400L290 540Q290 565 270 570L190 595M110 440L130 550M250 408L285 540M275 400L310 540Q300 570 270 572M77 500H97V520Q110 560 160 555Q190 540 208 540Q205 600 140 607Q85 600 80 520M100 530Q130 590 195 555M225 355l15 3M215 378l12 4"/>
                            <path d="M405 365Q410 340 450 352Q560 430 580 560Q560 585 535 582Q430 510 402 400zM420 430Q410 380 450 375L480 390Q430 400 420 430M515 400L630 450Q645 470 630 482L570 495M418 450L422 605Q440 620 455 600L487 555M535 582L540 650Q550 660 560 650L575 625L590 632Q605 630 600 610L635 605Q640 590 580 555M550 580L580 625M570 570L600 610"/>
                            <path d="M8 640L45 615L60 620L75 610L97 655L30 690L5 655zM140 650Q160 665 145 685Q150 700 162 715M125 738L175 730M125 738L130 795M130 795L198 718L295 780M115 805L300 780Q320 790 320 810M150 850L185 845M250 838L285 832M150 900L190 898M250 885L280 880M150 952L310 930M180 832L240 827L248 903L190 908z"/>
                            <circle cx="123" cy="832" r="26"/><circle cx="131" cy="880" r="26"/><circle cx="136" cy="928" r="26"/><circle cx="294" cy="810" r="26"/><circle cx="300" cy="857" r="26"/><circle cx="307" cy="905" r="26"/>
                            <path d="M690 570L820 490Q835 485 835 500L812 645Q800 660 790 645L765 605L797 543L745 597L695 580zM975 395L1110 415Q1135 425 1132 445L1115 530Q1110 550 1090 548L1025 538L985 553L978 528Q950 520 950 500L960 415Q965 395 975 395M1018 395Q1020 350 1060 350Q1100 360 1095 410M995 447L1095 465M990 474L1065 488"/>
                            <circle cx="1379" cy="533" r="114"/>
                            <path d="M1325 510Q1330 580 1380 580Q1430 570 1437 533M1368 503v2M1398 509v2M1335 425L1340 343L1380 417M1422 428L1490 373L1460 450M1488 488L1555 495L1490 532M1485 578L1537 645L1460 615M1425 640L1430 727L1378 650M1335 640L1277 702L1298 612M1272 580L1192 570L1265 533M1270 488L1212 425L1300 450"/>
                            <path d="M332 978H948L920 960Q850 945 815 960Q740 930 690 945L640 975M332 978L490 762L545 850L625 703L680 808M425 853L470 835L470 870Q480 885 490 865L500 820L545 845M570 808L605 790L608 830Q620 845 628 800L665 800M655 860Q645 830 670 825L770 755Q805 745 835 755L940 825Q950 860 920 870L803 797L680 870Q660 870 655 860M713 850V940M890 850V945M723 780V740M770 755V740M708 720Q710 700 725 700H765Q785 705 783 720Q780 740 765 740H725Q710 740 708 720M768 853H834V918H768zM801 853V918M768 885H834"/>
                            <path d="M830 750Q900 600 1050 603Q1250 620 1268 830Q1265 870 1220 990Q1195 1080 1250 1130Q1300 1180 1400 1170M928 815Q980 710 1060 725Q1150 750 1150 850L1110 950Q1060 1080 1130 1190Q1220 1310 1340 1290Q1460 1270 1510 1190M930 692Q960 670 998 665M1062 663Q1100 670 1130 690M1175 730Q1200 755 1210 795M1213 855Q1210 885 1195 920M1175 965Q1160 995 1157 1028M1157 1093Q1165 1130 1183 1162M1225 1210Q1250 1230 1290 1230M1340 1225Q1380 1215 1400 1200M888 742L875 780"/>
                            <path d="M1420 860Q1370 790 1335 825Q1320 850 1360 860Q1400 870 1350 940Q1370 960 1395 930L1415 880Q1400 960 1435 960Q1455 940 1445 890Q1480 920 1500 900Q1500 870 1450 865Q1530 850 1520 820Q1500 790 1450 850Q1490 770 1460 763Q1430 770 1425 850M1440 900Q1475 930 1475 990M1470 910Q1510 940 1515 990"/>
                            <path d="M130 1000Q135 990 170 1000L165 1030L155 1045L165 1060L152 1070L155 1100Q190 1110 178 1140L160 1195Q130 1205 115 1190L70 1185Q60 1180 62 1150L80 1100L115 1095zM115 1165L40 1225M45 1215L105 1175"/><circle cx="115" cy="1165" r="13"/>
                            <path d="M330 1230Q325 1150 400 1125Q480 1095 530 1165L590 1255M372 1155Q370 1200 420 1250M335 1180Q350 1230 410 1260M430 1120Q410 1160 430 1220M500 1140Q450 1150 445 1210M540 1170Q490 1190 488 1230Q500 1270 540 1290M425 1215l5 25M445 1215l3 20M463 1215l-3 20M530 1020Q500 1070 540 1115L640 1180Q700 1240 675 1290Q660 1320 630 1300"/>
                            <path d="M725 1150L720 1130Q720 1060 780 1045Q860 1040 883 1125M718 1165Q720 1155 885 1125Q900 1130 898 1150Q895 1170 885 1172L735 1198Q718 1195 718 1165M750 1045L770 1035L755 1015L775 1020L785 1005L800 1020L815 1020L805 1040L815 1055L790 1055L785 1070L770 1055zM925 1180Q920 1210 870 1212Q830 1220 810 1240Q760 1320 680 1320Q650 1322 630 1312M920 1250Q990 1180 1080 1255"/>
                        </g>

                        <!-- hammer, drum, skateboard, star anise -->
                        <g transform="translate(0 1700) scale(.34 .3333)">
                            <path d="M885 55L905 48L920 108L897 118zM910 70Q930 20 1000 12Q1060 20 1080 70Q1050 70 1045 62Q1010 70 1018 122L970 135Q960 90 925 105M970 135L998 238L1045 225L1018 122M1110 245L1300 135Q1320 150 1315 165L1130 285zM1120 235Q1120 220 1270 130Q1285 130 1290 140M1140 290Q1180 350 1240 358Q1340 340 1340 270Q1335 210 1305 175M1190 255L1210 348M1190 255L1288 335L1255 205L1335 275M1250 362L1298 470L1412 395L1335 305M1280 435L1385 372"/>
                            <path d="M640 170Q660 140 710 158Q850 260 1030 325Q1085 350 1085 400Q1060 475 1000 460L900 395M635 260Q680 290 740 300M735 260Q750 215 775 222Q800 235 785 260L770 295Q745 305 740 290M730 265l45 15M745 240l40 12M935 365Q950 320 975 328Q1000 340 985 365L970 400Q945 410 938 395M930 370l45 15M945 345l40 12M1480 350Q1460 150 1610 50Q1690 0 1690 0Q1700 280 1490 360zM1545 260V155L1568 180"/>
                            <circle cx="1222" cy="898" r="20"/><circle cx="1222" cy="898" r="2"/>
                            <path d="M1215 870Q1150 800 1155 750Q1215 800 1228 870M1228 868Q1240 770 1275 745Q1290 800 1240 875M1265 872Q1310 810 1425 828Q1370 880 1265 872M1245 905Q1320 890 1372 950Q1300 960 1245 905M1235 915Q1300 960 1292 1045Q1240 1000 1235 915M1218 920Q1220 1000 1170 1050Q1160 980 1210 915M1205 905Q1160 970 1080 970Q1110 910 1200 900M1200 890Q1120 890 1073 847Q1150 830 1205 880M1180 805l16 42M1255 800l-15 45M1330 855l45-8M1290 915l42 15M1255 960l15 42M1200 955l-15 40M1125 945l45-18M1120 865l40 15"/>
                            <path d="M1370 1045Q1360 1030 1385 1025L1430 1010L1425 985Q1435 970 1445 985L1455 1005L1505 990Q1525 995 1515 1010L1490 1025L1465 1095L1510 1110Q1520 1125 1500 1130L1460 1120L1440 1160Q1425 1170 1422 1155L1445 1100L1430 1070Q1440 1060 1455 1070L1468 1030z"/>
                            <path d="M5 300Q65 280 75 110M0 230Q30 200 35 110Q30 70 0 60M0 60L60 50"/>
                        </g>

                        <!-- laptop, avocado, pine, florist, lantern, koi -->
                        <g transform="translate(533 1700) scale(.34 .3333)">
                            <path d="M0 325Q150 230 155 60Q158 10 145 5L0 85M0 240L45 120L80 150L40 218L20 210M60 130L145 5"/>
                            <path d="M285 45Q285 15 310 10L440-15Q470-20 790-70L848 215Q845 240 820 245L370 335Q340 340 335 310zM445 0L475 165M805 0L820 75M235 268L320 253M235 268L350 430L795 340Q800 365 765 375L380 450Q360 450 350 430M600 295L665 360M338 122l98-22M350 196l100-20M312 30l18 18M330 28l-16 22M505 298Q455 270 455 210Q460 160 595 35L660 65L715 10Q790 60 820 75M575 95Q550 130 570 180M540 188L640 168L660 272M670 180Q740 150 748 200Q755 250 690 265M680 170L685 140L785 122L805 245M750 65Q790 90 790 130M505 298L690 270M545-10Q545 40 560 50Q590 50 600 30M505-80Q500-150 580-150Q560-210 640-200Q720-210 710-150Q780-130 745-60Q770 0 730 20M560-30Q570-130 640-125Q710-120 700-40Q680 30 630 20Q580 10 560-30M600-60q10-12 18 0M650-60q10-12 18 0M615-20q20 15 40 0"/>
                            <path d="M945 190Q950 110 1010 90Q1060 20 1110 15Q1200 20 1190 80L1165 140Q1160 240 1120 280Q1060 320 1000 290Q940 250 945 190M1190 50Q1220 80 1205 130Q1200 220 1185 260Q1140 340 1040 305M1165 25L1215-20M1185 30L1225 0M1070 65Q1075 85 1095 78M1072 98Q1080 120 1100 112M1110 90Q1120 110 1132 105M1045 150q10 15 25 5M1015 225q20 15 42 5M1090 185L1115 172M1090 208h22M1005 150L990 140M1025 135L1015 125"/><circle cx="1037" cy="192" r="60"/>
                            <path d="M1338 25Q1350 30 1420 130L1405 140L1458 195L1440 205L1487 255Q1470 262 1448 245Q1445 280 1425 270L1410 250L1395 285L1380 265L1370 295L1350 265Q1340 300 1325 290L1310 285L1300 295L1272 292L1295 230L1280 225L1300 155L1288 158zM1365 285L1362 355L1420 345L1405 280M1320 150Q1330 180 1342 155M1360 215Q1375 240 1390 225Q1395 245 1418 220"/>
                            <path d="M825 405L975 377L1000 515M825 405L855 560L940 550M843 420L962 398L980 488L862 510zM965 510L1098 570L1045 680L900 652zM970 528L1080 575L1045 660L933 610zM960 700L1110 673L1130 750M960 700L990 812L1040 805M985 800L1010 745L1035 770L1050 755L1080 785M1033 855Q1060 760 1155 755L1150 725L1165 725L1220 780L1165 840Q1150 845 1145 815Q1090 800 1033 855"/><circle cx="1083" cy="708" r="18"/>
                            <path d="M1183 508Q1270 405 1350 396Q1402 398 1396 455Q1385 530 1300 625Q1280 640 1250 632L1180 580Q1158 545 1183 508L1300 625M1163 575Q1200 565 1228 598Q1232 650 1180 645Q1150 640 1155 662Q1135 610 1175 590Q1170 620 1190 610Q1185 590 1205 585"/><circle cx="1322" cy="474" r="40"/><circle cx="1322" cy="474" r="22"/>
                            <circle cx="845" cy="677" r="33"/><path d="M865 700L888 723"/>
                            <path d="M110 575Q110 500 185 488Q265 500 262 590L235 600L240 620Q225 650 200 650M110 575Q160 580 185 540Q210 590 250 600M115 575Q115 640 160 645Q200 650 235 620M185 485Q190 430 230 433Q275 445 265 520M162 450L190 480M155 608Q165 615 175 605M170 630Q185 630 190 615M138 590l14-2M180 588l14 2M152 650V670Q180 690 215 670V650M152 655L80 660Q50 670 40 690M215 655Q300 650 325 690Q350 740 348 860Q340 900 290 915L180 940L145 970M138 660V733H233V660M115 660L100 860M265 655L270 850L140 912Q80 905 85 930L110 935L105 960L75 970M270 765L348 763M50 760L105 765M142 765H230V800Q220 840 185 840Q145 830 142 800zM0 972H300L290 915M0 685Q45 680 50 750L48 780M10 870Q10 775 60 773Q105 780 103 865M0 867H125L115 915"/><circle cx="27" cy="662" r="20"/>
                            <path d="M0 530Q-10 500 20 500L65 530L20 590L0 580M25 520L45 550"/>
                            <path d="M570 575Q600 565 620 590Q670 560 730 580Q755 610 745 640Q720 680 665 695L620 703Q530 730 490 780Q440 830 460 850L480 903Q440 870 397 880Q430 840 445 750Q470 660 575 605zM600 590Q630 620 640 670Q665 690 665 620L695 580M620 703L615 745Q640 755 668 690M460 740Q500 660 600 640M480 770Q530 680 590 685L603 705M490 780Q480 810 495 805L500 770M703 643v2"/>
                            <ellipse cx="655" cy="900" rx="117" ry="100"/><ellipse cx="655" cy="900" rx="83" ry="98"/><ellipse cx="655" cy="900" rx="40" ry="98" transform="rotate(14 655 900)"/>
                            <path d="M660 808Q665 790 720 820Q725 835 715 832zM585 975Q590 965 650 995Q650 1010 635 1008L590 990zM695 800Q700 770 730 755Q745 765 735 780L708 808M605 1005L592 1040Q560 1090 490 1095V1130Q570 1130 595 1040"/>
                            <path d="M825 890Q850 850 910 855L945 837L975 930L925 945L910 870Q880 890 825 890M925 945L955 1030L1000 1020L970 930M955 1030L985 1125L1030 1108L1000 1020M865 1040Q880 1010 925 1005L955 1035L885 1080L905 1035zM995 920Q1040 900 1105 920M995 920L1030 1010L1070 995L1045 920M1030 1010L1055 1100L1102 1085L1070 995M1030 915Q1070 910 1100 958L1040 940"/>
                            <path d="M118 1110Q125 1070 145 1065L335 1078Q370 1085 366 1110L355 1180Q350 1205 325 1203L150 1190Q115 1180 118 1110M145 1190V1205L315 1222L325 1205M285 1070Q290 1055 325 1065L330 1078M80 1080h30M90 1042l25 18M125 1018l12 28M0 1070L40 1155Q55 1155 52 1140L5 1050"/>
                            <path d="M605 1190Q610 1155 640 1155L760 1170L810 1230M650 1185Q675 1170 685 1195Q710 1175 725 1200Q720 1230 685 1235Q645 1220 650 1185M425 1235L500 1185Q515 1180 525 1190L585 1235"/>
                            <path d="M1010 1265L1095 1185Q1125 1185 1125 1210L1040 1300M1045 1230L1072 1255M1072 1205L1098 1232M1060 1320L1090 1285Q1125 1275 1125 1305L1060 1345"/>
                        </g>
                        <text x="583" y="461" transform="rotate(3 583 461)" font-size="32">1:13</text>
                    </g>
                </defs>
                <g transform="translate(0 -205)">
                    <use href="#doodles"/>
                    <use href="#doodles" x="918"/>
                    <use href="#doodles" x="-918"/>
                    <use href="#doodles" y="1632"/>
                    <use href="#doodles" x="918" y="1632"/>
                    <use href="#doodles" x="-918" y="1632"/>
                    <use href="#doodles" y="-1632"/>
                    <use href="#doodles" x="918" y="-1632"/>
                    <use href="#doodles" x="-918" y="-1632"/>
                </g>
            </svg>

            <div class="messages">
                <div class="bubble out call-bubble tail">
                    <div class="call-card">
                        <span class="call-icon"><svg width="38" height="38"><use href="#icon-call-out"/></svg></span>
                        <div class="call-text">
                            <strong>Voice call</strong>
                            <div class="call-row"><span>No answer</span><time>20:45</time></div>
                        </div>
                    </div>
                </div>

                <div class="day">Wednesday</div>

                <div class="bubble out call-bubble tail">
                    <div class="call-card">
                        <span class="call-icon"><svg width="38" height="38"><use href="#icon-call-out"/></svg></span>
                        <div class="call-text">
                            <strong>Voice call</strong>
                            <div class="call-row"><span>No answer</span><time>10:57</time></div>
                        </div>
                    </div>
                </div>
                <div class="bubble in call-bubble tail">
                    <div class="call-card">
                        <span class="call-icon missed"><svg width="38" height="38"><use href="#icon-call-in"/></svg></span>
                        <div class="call-text">
                            <strong>Missed voice call</strong>
                            <div class="call-row"><span>Tap to call back</span><time>15:12</time></div>
                        </div>
                    </div>
                </div>
                <div class="bubble in text-bubble tail"><p>6 vaje paryant pement kara</p><time>15:12</time></div>
                <div class="bubble out text-bubble tail"><p>Kiti</p><time>16:27</time><svg class="ticks"><use href="#icon-ticks"/></svg></div>
                <div class="bubble in text-bubble tail"><p>Hi</p><time>16:28</time></div>

                <div class="bubble out reply-bubble tail">
                    <blockquote class="quote">
                        <cite>Gulab Patil Colaba</cite>
                        <p>6 vaje paryant pement kara</p>
                    </blockquote>
                    <div class="reply-row"><p>??</p><time>16:29</time><svg class="ticks"><use href="#icon-ticks"/></svg></div>
                </div>
                <div class="bubble out text-bubble"><p>Kiti</p><time>16:29</time><svg class="ticks"><use href="#icon-ticks"/></svg></div>
                <div class="bubble out text-bubble"><p>Kadhi yeil</p><time>16:29</time><svg class="ticks"><use href="#icon-ticks"/></svg></div>
                <div class="bubble out text-bubble"><p>Scanner</p><time>16:29</time><svg class="ticks"><use href="#icon-ticks"/></svg></div>

                <div class="day">Thursday</div>

                <div class="bubble in text-bubble tail"><p>Hii</p><time>15:03</time></div>
                <div class="bubble in text-bubble"><p>Pathavto</p><time>15:03</time></div>
                <div class="bubble in text-bubble"><p>15minit</p><time>15:03</time></div>
                <div class="bubble in text-bubble multi"><p>10kg rc<br>14 pis grevy</p><time>15:13</time></div>
                <div class="bubble in next-bubble"></div>
            </div>

            <button class="scroll-down" type="button" aria-label="Scroll to latest">
                <svg width="28" height="34" viewBox="0 0 28 34"><path d="M2 3l12 12L26 3M2 18l12 12l12-12" fill="none" stroke="currentColor" stroke-width="5" stroke-linecap="round"/></svg>
            </button>

            <form class="composer">
                <div class="composer-bar">
                    <button class="icon-button" type="button" aria-label="Emoji">
                        <svg width="52" height="52" viewBox="0 0 52 52"><rect x="2.500" y="2.500" width="47" height="47" rx="17" fill="none" stroke="currentColor" stroke-width="5"/><circle cx="17" cy="18" r="4" fill="currentColor"/><circle cx="35" cy="18" r="4" fill="currentColor"/><path d="M14 30q12 14 24 0z" fill="currentColor"/></svg>
                    </button>
                    <input class="composer-input" type="text" placeholder="Message" aria-label="Message">
                    <button class="icon-button attach" type="button" aria-label="Attach">
                        <svg width="33" height="52" viewBox="0 0 33 52"><path d="M30 13v23q-2 13-14 13Q3 48 3 35V12Q4 3 12 3t9 9v22q-1 5-5 5t-5-5V13" fill="none" stroke="currentColor" stroke-width="5" stroke-linecap="round"/></svg>
                    </button>
                    <button class="icon-button pay" type="button" aria-label="Payment">
                        <svg width="52" height="52" viewBox="0 0 52 52"><circle cx="26" cy="26" r="23.500" fill="none" stroke="currentColor" stroke-width="5"/><path d="M17 17h18M17 24h18M20 17q14 0 9 8q-2 5-10 5l11 10" fill="none" stroke="currentColor" stroke-width="4"/></svg>
                    </button>
                    <button class="icon-button camera" type="button" aria-label="Camera">
                        <svg width="52" height="48" viewBox="0 0 52 48"><path d="M5 9h11l4-6h12l4 6h11q2 0 2 2v32q0 2-2 2H5q-2 0-2-2V11q0-2 2-2z" fill="none" stroke="currentColor" stroke-width="5" stroke-linejoin="round"/><circle cx="26" cy="26" r="9" fill="none" stroke="currentColor" stroke-width="5"/></svg>
                    </button>
                </div>
                <button class="mic" type="button" aria-label="Record voice message">
                    <svg width="42" height="58" viewBox="0 0 42 58"><rect x="13.500" y="4" width="15" height="34" rx="7.500" fill="currentColor"/><path d="M3 27q2 16 18 16t18-16M21 43v14" fill="none" stroke="currentColor" stroke-width="5"/></svg>
                </button>
            </form>
        </main>
    </div>
</body>
</html>
```
FILE: styles.css
```css
* {
    box-sizing: border-box;
}
body {
    margin: 0;
    background-color: #0b1014;
    color: #f7f8fa;
    font-family: Roboto, "Noto Sans", sans-serif;
    font-size: 32px;
    line-height: 38px;
}
p, h1, blockquote {
    margin: 0;
}
button {
    border: 0;
    padding: 0;
    background: none;
    color: inherit;
    font: inherit;
}
.sprite {
    position: absolute;
    width: 0;
    height: 0;
}
.app {
    display: flex;
    flex-direction: column;
    height: 100vh;
    overflow: hidden;
}

/* Top area */
.status-bar {
    display: flex;
    justify-content: space-between;
    height: 65px;
    padding: 12px 67px 20px 153px;
}
.status-left {
    width: 105px;
    background: #363a3d;
}
.status-right {
    width: 321px;
    background: linear-gradient(90deg, #414446 0 32%, #3c4042 32% 65%, #434648 65% 98%, #4b4e50 98%);
}
.chat-header {
    display: flex;
    align-items: center;
    height: 140px;
    padding: 0 51px 2px 26px;
    border-bottom: 1px solid #22282b;
}
.icon-button {
    display: flex;
    align-items: center;
}
.avatar {
    width: 92px;
    height: 92px;
    margin: 0 29px 0 51px;
}
.avatar-label {
    fill: #2b3350;
    font-size: 8px;
    font-weight: 700;
    letter-spacing: 1px;
}
.contact-name {
    flex: 1;
    font-size: 39px;
    font-weight: 400;
    line-height: 48px;
}
.call {
    gap: 30px;
    margin-right: 51px;
}

/* Chat area */
.conversation {
    position: relative;
    display: flex;
    flex: 1;
    flex-direction: column;
    min-height: 0;
    overflow: hidden;
}
.wallpaper {
    position: absolute;
    inset: 0;
    width: 100%;
    height: 100%;
    fill: none;
    stroke: #20262a;
    stroke-width: 2.5;
    stroke-linecap: round;
    stroke-linejoin: round;
}
.wallpaper path, .wallpaper circle, .wallpaper ellipse {
    vector-effect: non-scaling-stroke;
}
.wallpaper text {
    stroke-width: 1.5;
}
.wallpaper .rings path {
    stroke: none;
}
.wallpaper .ring {
    fill: none;
    stroke: #20262a;
    stroke-width: 2.5;
}
.s {
    marker: url(#ring-s);
}
.m {
    marker: url(#ring-m);
}
.l {
    marker: url(#ring-l);
}
.messages {
    position: relative;
    display: flex;
    flex: 1;
    flex-direction: column;
    min-height: 0;
    padding: 0 44px 0 30px;
    overflow: hidden;
}
.messages > * {
    flex-shrink: 0;
}
.bubble {
    position: relative;
    margin-top: 5px;
    border-radius: 30px;
}
.in {
    align-self: flex-start;
    background: #1f272a;
}
.out {
    align-self: flex-end;
    background: #144d37;
}
.bubble.tail {
    margin-top: 25px;
}
.bubble.call-bubble {
    margin-bottom: 1px;
}
.bubble.call-bubble:first-child {
    margin-top: -23px;
}
.out.tail {
    border-top-right-radius: 0;
}
.in.tail {
    border-top-left-radius: 0;
}
.tail::after {
    content: "";
    position: absolute;
    top: 0;
    width: 18px;
    height: 28px;
    background: inherit;
}
.out.tail::after {
    left: 100%;
    clip-path: path("M0 0H13Q20 2 17 8L0 27Z");
}
.in.tail::after {
    right: 100%;
    clip-path: path("M18 0H5Q-2 2 1 8L18 27Z");
}
time {
    color: #a1a6a8;
    font-size: 28px;
    line-height: 33px;
}
.out time {
    color: #a0b8ae;
}
.ticks {
    width: 41px;
    height: 26px;
    margin: 0 0 4px 11px;
    color: #53bdeb;
}

.text-bubble {
    display: flex;
    align-items: flex-end;
    padding: 17px 21px 10px 24px;
}
.text-bubble p {
    margin: 0 36px 13px 0;
}
.text-bubble.out {
    padding-top: 18px;
    padding-bottom: 12px;
}
.text-bubble.out p {
    margin: 0 22px 10px 0;
}
.text-bubble.multi {
    padding-top: 14px;
    padding-bottom: 6px;
}
.next-bubble {
    width: 270px;
    height: 78px;
}

.call-bubble {
    padding: 10px 9px;
}
.call-card {
    display: flex;
    align-items: flex-start;
    height: 144px;
    padding: 21px 22px 22px 21px;
    border-radius: 22px;
    background: #1d2429;
}
.out .call-card {
    background: #144232;
}
.call-icon {
    display: flex;
    align-items: center;
    justify-content: center;
    width: 102px;
    height: 102px;
    border-radius: 50%;
    background: #2d5848;
    color: #8d9598;
}
.call-icon.missed {
    background: #353a41;
    color: #fb5061;
}
.call-text {
    padding: 5px 0 0 20px;
}
.call-text strong {
    display: block;
    margin-bottom: 5px;
}
.call-row {
    display: flex;
    align-items: flex-end;
    gap: 32px;
}
.call-row span {
    margin-bottom: 15px;
    color: #a1a6a8;
}
.out .call-row span {
    color: #a0b8ae;
}

.reply-bubble {
    padding: 10px 9px;
}
.quote {
    height: 122px;
    padding: 23px 21px 0 30px;
    border-radius: 20px;
    background: linear-gradient(90deg, #a58fff 10px, #144232 10px);
    color: #a0b8ae;
}
.quote cite {
    display: block;
    margin-bottom: 3px;
    color: #d6cdff;
    font-size: 28px;
    font-style: normal;
    font-weight: 500;
}
.reply-row {
    display: flex;
    align-items: flex-end;
    padding: 14px 12px 0 16px;
}
.reply-row p {
    flex: 1;
    margin-bottom: 10px;
}

.day {
    align-self: center;
    margin-top: 27px;
    padding: 13px 23px 12px;
    border-radius: 20px;
    background: #12181b;
    color: #8c9295;
    font-size: 29px;
    font-weight: 500;
}

.scroll-down {
    position: absolute;
    right: 30px;
    bottom: 104px;
    display: flex;
    align-items: center;
    justify-content: center;
    width: 82px;
    height: 82px;
    border-radius: 50%;
    background: #26323a;
    color: #949a9f;
    box-shadow: 0 1px 3px rgba(0, 0, 0, 0.4);
}

/* Composer, runs past the bottom edge */
.composer {
    position: relative;
    display: flex;
    flex: 0 0 63px;
    align-items: flex-start;
    gap: 22px;
    height: 63px;
    min-height: 0;
    padding: 6px 23px 0 8px;
}
.composer-bar {
    display: flex;
    flex: 1;
    align-items: center;
    min-width: 0;
    height: 120px;
    margin-top: 4px;
    padding: 0 34px;
    border-radius: 60px;
    background: #1f272a;
    color: #8d9598;
}
.composer-input {
    flex: 1;
    min-width: 0;
    margin-left: 36px;
    padding: 0;
    border: 0;
    outline: 0;
    background: none;
    color: #f7f8fa;
    font: inherit;
    font-size: 38px;
}
.composer-input::placeholder {
    color: #8d9598;
}
.pay {
    margin: 0 71px 0 81px;
}
.mic {
    display: flex;
    align-items: center;
    justify-content: center;
    flex: none;
    width: 122px;
    height: 122px;
    border-radius: 50%;
    background: #21c063;
    color: #0b1014;
}
```
